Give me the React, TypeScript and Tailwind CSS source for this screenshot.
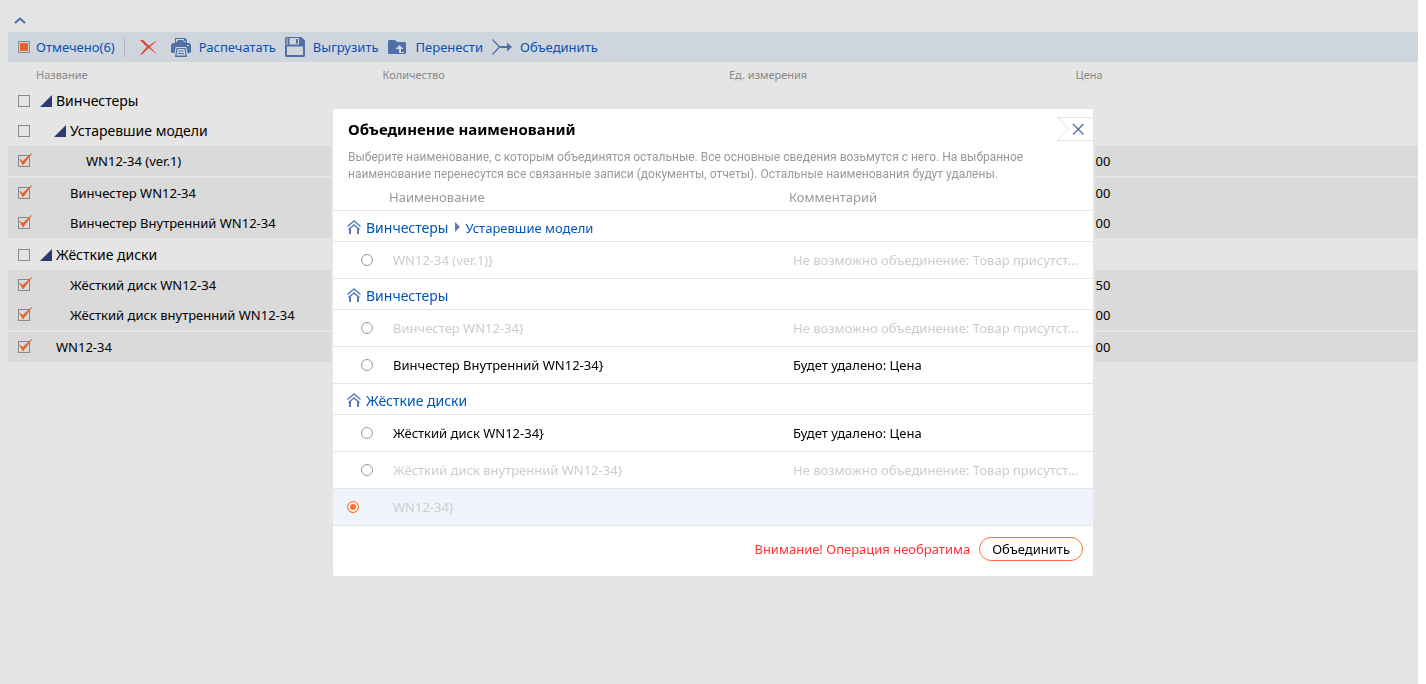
import { useState } from "react";
import type { ReactNode } from "react";

type Item = {
  name: string;
  price?: string;
  kind: "folder" | "item";
  pad: string;
  gap?: boolean;
};

const items: Item[] = [
  { name: "Винчестеры", kind: "folder", pad: "pl-2" },
  { name: "Устаревшие модели", kind: "folder", pad: "pl-[22px]" },
  { name: "WN12-34 (ver.1)", kind: "item", pad: "pl-[54px]", price: "00", gap: true },
  { name: "Винчестер WN12-34", kind: "item", pad: "pl-[38px]", price: "00" },
  { name: "Винчестер Внутренний WN12-34", kind: "item", pad: "pl-[38px]", price: "00", gap: true },
  { name: "Жёсткие диски", kind: "folder", pad: "pl-2" },
  { name: "Жёсткий диск WN12-34", kind: "item", pad: "pl-[38px]", price: "50" },
  { name: "Жёсткий диск внутренний WN12-34", kind: "item", pad: "pl-[38px]", price: "00", gap: true },
  { name: "WN12-34", kind: "item", pad: "pl-6", price: "00" },
];

type MergeRow =
  | { type: "group"; path: string[] }
  | { type: "option"; id: string; name: string; comment: string; muted?: boolean; root?: boolean };

const conflict = "Не возможно объединение: Товар присутст...";

const mergeRows: MergeRow[] = [
  { type: "group", path: ["Винчестеры", "Устаревшие модели"] },
  { type: "option", id: "ver1", name: "WN12-34 (ver.1)}", comment: conflict, muted: true },
  { type: "group", path: ["Винчестеры"] },
  { type: "option", id: "hdd", name: "Винчестер WN12-34}", comment: conflict, muted: true },
  { type: "option", id: "hdd-int", name: "Винчестер Внутренний WN12-34}", comment: "Будет удалено: Цена" },
  { type: "group", path: ["Жёсткие диски"] },
  { type: "option", id: "disk", name: "Жёсткий диск WN12-34}", comment: "Будет удалено: Цена" },
  { type: "option", id: "disk-int", name: "Жёсткий диск внутренний WN12-34}", comment: conflict, muted: true },
  { type: "option", id: "root", name: "WN12-34}", comment: "", muted: true, root: true },
];

function PrinterIcon() {
  return (
    <svg width="20" height="19" viewBox="0 0 20 19" fill="#506fa6" aria-hidden="true">
      <path d="M4 0h10l2 2v3H4z" />
      <path d="M5 1h8v2h2v1H5z" fill="#ced5dd" />
      <path d="M6.500 2h6v3h-6z" />
      <path d="M1.500 5h17L20 7v7l-1 1h-2.500l-1.200-6H4.700l-1.200 6H1l-1-1V7z" />
      <path d="M5.500 10h9l1.500 9H4z" />
      <path d="M6.500 11h7l1 6.500h-9z" fill="#ced5dd" />
      <path d="M7.500 12.500h5v1h-5zM7 15h6v1H7z" />
      <path d="M16 7h2v1h-2z" fill="#ced5dd" />
    </svg>
  );
}

function SaveIcon() {
  return (
    <svg width="20" height="20" viewBox="0 0 20 20" aria-hidden="true">
      <path d="M1 0h15.500L20 3.500V19l-1 1H1l-1-1V1z" fill="#506fa6" />
      <path d="M4.500 1h9.500v6.500h-9.500z" fill="#ced5dd" />
      <path d="M11 2h2v4.500h-2z" fill="#506fa6" />
      <path d="M2 9.500h16V18H2z" fill="#ced5dd" />
      <path d="M1.500 1h1v7h-1z" fill="#ced5dd" />
    </svg>
  );
}

function MoveIcon() {
  return (
    <svg width="18" height="14" viewBox="0 0 18 14" aria-hidden="true">
      <path d="M1 0h6l2 2h8l1 1v10l-1 1H1l-1-1V1z" fill="#506fa6" />
      <path d="M11.500 5l4 4h-2.500v3h3v1h-5V9H7.500z" fill="#ced5dd" />
    </svg>
  );
}

function MergeIcon() {
  return (
    <svg width="20" height="16" viewBox="0 0 20 16" fill="none" stroke="#506fa6" aria-hidden="true">
      <path d="M.5.500 7.500 8l-7 7.500" strokeWidth="1.300" />
      <path d="M7 8h9" strokeWidth="2" />
      <path d="M15 3.500v9L20 8z" fill="#506fa6" stroke="none" />
    </svg>
  );
}

function ToolButton({ icon, children }: { icon: ReactNode; children: ReactNode }) {
  return (
    <button type="button" className="flex items-center text-[13px] text-[#0950b0]">
      <span className="mr-2 flex w-5">{icon}</span>
      <span className="pt-0.5">{children}</span>
    </button>
  );
}

function TickBox({ label, defaultChecked }: { label: string; defaultChecked: boolean }) {
  return (
    <span className="relative ml-[10px] block size-3">
      <input
        type="checkbox"
        aria-label={label}
        defaultChecked={defaultChecked}
        className="peer block size-3 appearance-none border border-[#888888]"
      />
      <svg
        width="14"
        height="13"
        viewBox="0 0 14 13"
        className="pointer-events-none absolute -top-0.5 left-0 hidden peer-checked:block"
        aria-hidden="true"
      >
        <path d="M.8 5.200 4.800 8 13.500 0l.5.500L5 12.500z" fill="#e8622c" />
      </svg>
    </span>
  );
}

function HomeArrow() {
  return (
    <svg width="14" height="14" viewBox="0 0 14 14" fill="none" stroke="#5b7cba" aria-hidden="true">
      <path d="M.5 6.500 7 1l6.500 5.500" strokeWidth="1.500" />
      <path d="M1.500 9.500 7 5l5.500 4.500" strokeWidth="1.500" />
      <path d="M3 8v6M11 8v6" strokeWidth="2" />
    </svg>
  );
}

function MergeDialog() {
  const [target, setTarget] = useState("root");
  return (
    <div className="fixed inset-0 flex items-center justify-center pt-px">
      <section
        role="dialog"
        aria-labelledby="merge-title"
        className="w-full max-w-[760px] rounded-[2px] bg-white shadow-[0_0_0_2px_#e5e5e5]"
      >
        <header className="flex items-start justify-between pt-2">
          <h2 id="merge-title" className="pl-[15px] text-[15px] leading-6 font-bold text-black">
            Объединение наименований
          </h2>
          <button type="button" aria-label="Закрыть" className="flex">
            <svg width="36" height="24" viewBox="0 0 36 24" fill="none" aria-hidden="true">
              <path d="M36 .5H.5L12 12 .5 23.500H36" stroke="#e5e5e5" />
              <path d="m16 7 10.500 10.500M26.500 7 16 17.500" stroke="#506fa6" strokeWidth="1.300" />
            </svg>
          </button>
        </header>
        <p className="mt-2 px-[15px] font-['Roboto',sans-serif] text-[12px] leading-[17px] text-[#999999]">
          Выберите наименование, с которым объединятся остальные. Все основные сведения возьмутся с него. На выбранное
          <br />
          наименование перенесутся все связанные записи (документы, отчеты). Остальные наименования будут удалены.
        </p>
        <table className="w-full table-fixed border-separate border-spacing-0 text-left text-[13px] [&_td]:border-b [&_td]:border-[#e5e5e5] [&_th]:border-b [&_th]:border-[#e5e5e5]">
          <colgroup>
            <col className="w-[52px]" />
            <col className="w-[400px]" />
            <col />
          </colgroup>
          <thead>
            <tr className="h-7 text-[#999999]">
              <td />
              <th className="pt-0.5 pl-1 font-normal">Наименование</th>
              <th className="pt-0.5 pl-1 font-normal">Комментарий</th>
            </tr>
          </thead>
          <tbody>
            {mergeRows.map((row, index) =>
              row.type === "group" ? (
                <tr key={index} className="h-[31px]">
                  <td colSpan={3} className="pt-0.5 pl-[14px]">
                    <span className="flex items-center leading-5 text-[#0055bb]">
                      <HomeArrow />
                      <a href="#group" className="ml-[5px] pt-0.5 text-[14px]">
                        {row.path[0]}
                      </a>
                      {row.path[1] && (
                        <>
                          <svg width="5" height="10" viewBox="0 0 5 10" className="mr-[5px] ml-[7px]" aria-hidden="true">
                            <path d="M0 0l5 5-5 5z" fill="#5b7cba" />
                          </svg>
                          <a href="#subgroup" className="pt-0.5">
                            {row.path[1]}
                          </a>
                        </>
                      )}
                    </span>
                  </td>
                </tr>
              ) : (
                <tr
                  key={index}
                  className={`h-[37px] ${row.muted ? "text-[#cccccc]" : "text-black"} ${
                    target === row.id ? "bg-[#eff4fc]" : ""
                  }`}
                >
                  <td className={row.root ? "pl-[14px]" : "pl-7"}>
                    <input
                      type="radio"
                      name="merge-target"
                      id={row.id}
                      checked={target === row.id}
                      onChange={() => setTarget(row.id)}
                      className="block size-3 appearance-none rounded-full border border-[#999999] bg-white checked:border-[#ff7033] checked:bg-[#ff7033] checked:shadow-[inset_0_0_0_2px_#ffffff]"
                    />
                  </td>
                  <td className="pt-0.5 pl-2">
                    <label htmlFor={row.id}>{row.name}</label>
                  </td>
                  <td className="pt-0.5 pl-2 whitespace-nowrap">{row.comment}</td>
                </tr>
              ),
            )}
          </tbody>
        </table>
        <footer className="flex h-[50px] items-start justify-end pt-[11px] pr-[10px] text-[13px] leading-6">
          <span className="text-[#ff3333]">Внимание! Операция необратима</span>
          <button
            type="button"
            className="ml-[9px] h-6 rounded-full border border-[#ff7033] px-3 leading-[22px] text-black"
          >
            Объединить
          </button>
        </footer>
      </section>
    </div>
  );
}

export default function App() {
  return (
    <div className="min-h-screen bg-white pr-2 font-['Noto_Sans',sans-serif]">
      <main className="min-h-screen bg-[#e5e5e5] pl-2">
        <div className="flex h-8 items-end pb-2 pl-1.5">
          <button type="button" aria-label="Свернуть">
            <svg width="12" height="7" viewBox="0 0 12 7" fill="none" aria-hidden="true">
              <path d="M1 6l5-4.500L11 6" stroke="#506fa6" strokeWidth="2" />
            </svg>
          </button>
        </div>
        <div className="flex h-[30px] items-center bg-[#ced5dd]">
          <label className="flex items-center text-[13px] text-[#0950b0]">
            <input
              type="checkbox"
              defaultChecked
              className="mr-1.5 ml-[10px] size-3 appearance-none border border-[#888888] checked:bg-[#e2622c] checked:shadow-[inset_0_0_0_1px_#ced5dd]"
            />
            <span className="pt-0.5">Отмечено(6)</span>
          </label>
          <span className="ml-[9px] h-5 w-px bg-[#b5b9be]" />
          <button type="button" aria-label="Удалить" className="mr-[14px] ml-[15px]">
            <svg width="17" height="15" viewBox="0 0 17 15" aria-hidden="true">
              <path d="M0 0h3l6 5.800L15.500 1h1L10 7l6.500 6.500-1-.2L8.800 8 2 14.500H0L7 7z" fill="#dd4534" />
            </svg>
          </button>
          <div className="flex gap-[9px]">
            <ToolButton icon={<PrinterIcon />}>Распечатать</ToolButton>
            <ToolButton icon={<SaveIcon />}>Выгрузить</ToolButton>
            <ToolButton icon={<MoveIcon />}>Перенести</ToolButton>
            <ToolButton icon={<MergeIcon />}>Объединить</ToolButton>
          </div>
        </div>
        <table className="w-full table-fixed border-separate border-spacing-0 text-left">
          <colgroup>
            <col className="w-6" />
            <col />
            <col />
            <col />
            <col />
          </colgroup>
          <thead>
            <tr className="h-6 text-[11px] text-[#888888]">
              <td />
              <th className="pt-0.5 pl-1 font-normal">Название</th>
              <th className="pt-0.5 pl-1 font-normal">Количество</th>
              <th className="pt-0.5 pl-1 font-normal">Ед. измерения</th>
              <th className="pt-0.5 pl-1 font-normal">Цена</th>
            </tr>
          </thead>
          <tbody>
            {items.map((item) => (
              <tr
                key={item.name}
                className={`text-black ${item.kind === "item" ? "bg-[#dadada] text-[13px]" : "text-[14px]"} ${
                  item.gap ? "h-8 [&>td]:border-b-2 [&>td]:border-[#e5e5e5]" : "h-[30px]"
                }`}
              >
                <td>
                  <TickBox label={item.name} defaultChecked={item.kind === "item"} />
                </td>
                <td className={item.pad}>
                  <span className="flex items-center leading-5">
                    {item.kind === "folder" && (
                      <svg width="12" height="12" viewBox="0 0 12 12" className="mr-1" aria-hidden="true">
                        <path d="M12 0v12H0z" fill="#2c3a73" />
                      </svg>
                    )}
                    {item.name}
                  </span>
                </td>
                <td />
                <td />
                <td className="pl-6 text-[13px] leading-5">{item.price}</td>
              </tr>
            ))}
          </tbody>
        </table>
      </main>
      <MergeDialog />
    </div>
  );
}
